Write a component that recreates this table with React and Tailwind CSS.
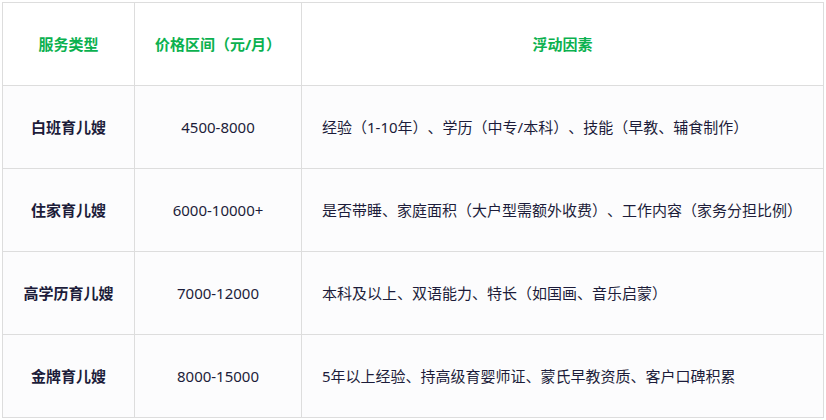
import React from "react";

const rows = [
  ["白班育儿嫂", "4500-8000", "经验（1-10年）、学历（中专/本科）、技能（早教、辅食制作）"],
  ["住家育儿嫂", "6000-10000+", "是否带睡、家庭面积（大户型需额外收费）、工作内容（家务分担比例）"],
  ["高学历育儿嫂", "7000-12000", "本科及以上、双语能力、特长（如国画、音乐启蒙）"],
  ["金牌育儿嫂", "8000-15000", "5年以上经验、持高级育婴师证、蒙氏早教资质、客户口碑积累"],
];

export default function App() {
  return (
    <div className="bg-white w-[826px] h-[420px] pt-[2px] pl-[2px] [text-spacing-trim:space-all]" style={{ fontFamily: '"Noto Sans", "Noto Sans CJK SC", sans-serif' }}>
      <table className="border-collapse table-fixed w-[821px] text-[15px] text-[#1c1c3a]">
        <colgroup>
          <col className="w-[132px]" />
          <col className="w-[167px]" />
          <col className="w-[522px]" />
        </colgroup>
        <thead>
          <tr className="h-[83px] bg-white">
            <th className="border border-[#dddddd] text-center font-bold text-[#0bb14f]">服务类型</th>
            <th className="border border-[#dddddd] text-center font-bold text-[#0bb14f]">价格区间（元/月）</th>
            <th className="border border-[#dddddd] text-center font-bold text-[#0bb14f]">浮动因素</th>
          </tr>
        </thead>
        <tbody>
          {rows.map((r) => (
            <tr key={r[0]} className="h-[83px] bg-[#fcfcfd]">
              <td className="border border-[#dddddd] text-center font-bold">{r[0]}</td>
              <td className="border border-[#dddddd] text-center">{r[1]}</td>
              <td className="border border-[#dddddd] text-left pl-[20px]">{r[2]}</td>
            </tr>
          ))}
        </tbody>
      </table>
    </div>
  );
}
